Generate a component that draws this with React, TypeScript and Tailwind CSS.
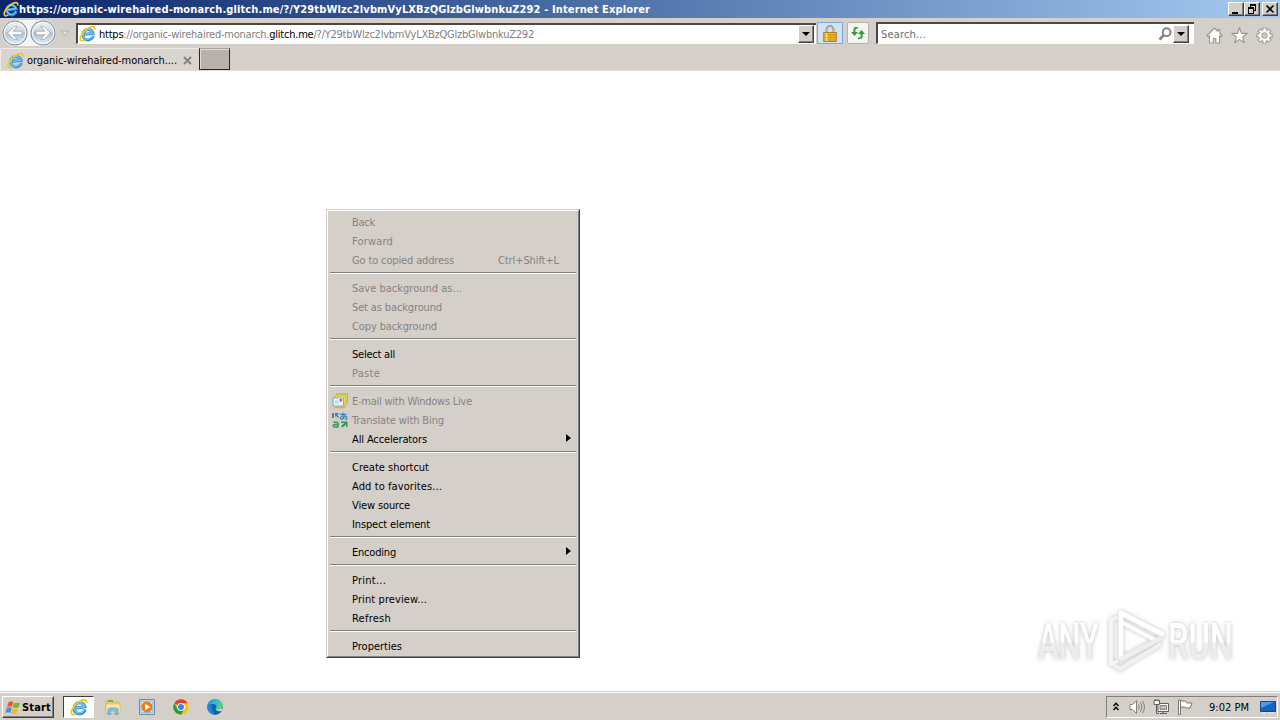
import { useLayoutEffect, useRef, useState } from "react";
import { clsx } from "clsx";

interface FitTextProps {
  width: number;
  className?: string;
  children: React.ReactNode;
}

// Spreads or tightens the letters so that a label takes up exactly `width` pixels.
function FitText({ width, className = "", children }: FitTextProps) {
  const ref = useRef<HTMLSpanElement>(null);
  const [spacing, setSpacing] = useState<number>(0);

  useLayoutEffect(() => {
    const el = ref.current;
    if (!el) return;
    el.style.letterSpacing = "0px";
    const count = (el.textContent || "").length;
    const next = (width - el.getBoundingClientRect().width) / count;
    el.style.letterSpacing = next + "px";
    setSpacing(next);
  }, [width]);

  return (
    <span
      ref={ref}
      className={clsx("inline-block shrink-0 whitespace-pre", className)}
      style={{ letterSpacing: spacing + "px" }}
    >
      {children}
    </span>
  );
}

function IeIcon({ className = "" }: { className?: string }) {
  return (
    <svg viewBox="0 0 18 18" className={clsx("shrink-0", className)}>
      <g transform="rotate(-8 9 9)">
        <path
          d="M14.6 12.200A5.500 5.500 0 1 1 14.900 9.600H5"
          fill="none"
          stroke="#2f8fdc"
          strokeWidth="3.2"
        />
        <path
          d="M14 12.100A5.200 5.200 0 1 1 14.500 9.400H5.500"
          fill="none"
          stroke="#6fcbf7"
          strokeWidth="1.5"
        />
      </g>
      <path
        d="M2.600 16.600C-.6 15 3 7.600 9 3.800c4.200-2.700 8-2.800 7.600.6"
        fill="none"
        stroke="#f6c81f"
        strokeWidth="1.900"
        strokeLinecap="round"
      />
      <path d="M2.400 16.500c1.100.5 2.500 0 3.600-.7" fill="none" stroke="#f6c81f" strokeWidth="1.500" />
    </svg>
  );
}

function NavButton({ forward = false }: { forward?: boolean }) {
  return (
    <svg viewBox="0 0 26 26" className="h-[26px] w-[26px] shrink-0">
      <defs>
        <linearGradient id="navFill" x1="0" y1="0" x2="0" y2="1">
          <stop offset="0" stopColor="#f2f4f6" />
          <stop offset="0.4" stopColor="#d3d9df" />
          <stop offset="0.52" stopColor="#b4bfca" />
          <stop offset="1" stopColor="#dff3fb" />
        </linearGradient>
      </defs>
      <circle cx="13" cy="13" r="11.900" fill="url(#navFill)" stroke="#8493a3" strokeWidth="1.300" />
      <circle cx="13" cy="13" r="10.700" fill="none" stroke="#f4f9fc" strokeWidth="1.100" />
      <path
        d="M5.500 13l6.500-6.300h3.400L11 11.200h9v3.600h-9l4.400 4.500H12z"
        fill="#fff"
        stroke="#9ba6b1"
        strokeWidth="0.8"
        transform={forward ? "rotate(180 13 13)" : undefined}
      />
    </svg>
  );
}

function ClassicButton({ className = "", children }: { className?: string; children?: React.ReactNode }) {
  return (
    <div
      className={clsx(
        "flex shrink-0 items-center justify-center border border-t-white border-l-white border-r-[#404040] border-b-[#404040] bg-[#d4d0c8] shadow-[inset_-1px_-1px_0_#808080]",
        className
      )}
    >
      {children}
    </div>
  );
}

function TitleBar() {
  return (
    <div className="flex h-[18px] items-center bg-linear-to-r from-[#0a246a] to-[#a6caf0] pl-[3px] pr-[2px]">
      <IeIcon className="h-4 w-4" />
      <FitText width={631} className="pt-px font-bold leading-[18px] text-white">
        https://organic-wirehaired-monarch.glitch.me/?/Y29tbWlzc2lvbmVyLXBzQGlzbGlwbnkuZ292 - Internet Explorer
      </FitText>
      <div className="ml-auto flex">
        <ClassicButton className="h-[14px] w-4">
          <svg viewBox="0 0 12 10" className="h-[10px] w-3">
            <path d="M2 8h6v2H2z" />
          </svg>
        </ClassicButton>
        <ClassicButton className="h-[14px] w-4">
          <svg viewBox="0 0 12 10" className="h-[10px] w-3" shapeRendering="crispEdges">
            <path d="M4 0h6v7H8V6h1V2H5v1H4zM2 3h6v7H2zM3 5v4h4V5z" fillRule="evenodd" />
          </svg>
        </ClassicButton>
        <ClassicButton className="ml-[2px] h-[14px] w-4">
          <svg viewBox="0 0 12 10" className="h-[10px] w-3">
            <path d="M2.500 1.500l7 7M9.500 1.500l-7 7" stroke="#000" strokeWidth="1.700" />
          </svg>
        </ClassicButton>
      </div>
    </div>
  );
}

function DropArrow({ className = "" }: { className?: string }) {
  return (
    <ClassicButton className={className}>
      <svg viewBox="0 0 8 4" className="h-1 w-2">
        <path d="M0 0h8L4 4z" />
      </svg>
    </ClassicButton>
  );
}

function AddressRow() {
  return (
    <div className="flex h-[30px] items-center pl-[2px]">
      <div className="flex h-[26px] items-center rounded-full bg-[#f4f5f5]">
        <NavButton />
        <div className="ml-[2px]">
          <NavButton forward />
        </div>
      </div>
      <svg viewBox="0 0 10 7" className="ml-1 mt-px h-[7px] w-[10px]">
        <path d="M1 1h8L5 5.500z" fill="#e8e5e1" stroke="#aaa5a0" strokeWidth="0.9" />
      </svg>
      <div className="ml-[6px] flex h-[21px] w-[740px] items-center border-t-2 border-l-2 border-b border-t-[#4c4743] border-l-[#4c4743] border-b-white bg-white">
        <IeIcon className="ml-[1px] h-[17px] w-[17px]" />
        <FitText width={435} className="ml-[3px] pt-[2px] leading-[17px] text-[#808080]">
          <span className="text-black">https</span>://organic-wirehaired-monarch.
          <span className="text-black">glitch.me</span>/?/Y29tbWlzc2lvbmVyLXBzQGlzbGlwbnkuZ292
        </FitText>
        <DropArrow className="ml-auto mr-[2px] h-[18px] w-4" />
      </div>
      <div className="ml-[1px] flex h-[22px] w-[26px] items-center justify-center border border-[#7fa9dc] bg-[#cfe2f8]">
        <svg viewBox="0 0 14 17" className="h-[17px] w-[14px]">
          <path d="M3.500 8V4.500a3.500 3.500 0 0 1 7 0V8" fill="none" stroke="#8d8465" strokeWidth="1.800" />
          <path d="M3.500 8V4.500a3.500 3.500 0 0 1 7 0V8" fill="none" stroke="#e5dfc8" strokeWidth="0.6" />
          <rect x="0.700" y="7.500" width="12.600" height="9" fill="#efb51f" stroke="#a8740e" strokeWidth="0.8" />
          <path d="M1 10h12M1 12.500h12M1 15h12" stroke="#c58a13" strokeWidth="0.8" />
          <path d="M3.500 8v8" stroke="#fbe08a" strokeWidth="1.500" />
        </svg>
      </div>
      <div className="ml-1 flex h-[22px] w-[22px] items-center justify-center rounded-[2px] border border-[#b5b2ae] bg-[#f3f3f1]">
        <svg viewBox="0 0 16 14" className="h-[14px] w-4">
          <path d="M7 1.500H5.800Q4.400 1.500 4.400 3V5H7L3.500 9 0 5h2.400V3Q2.400 0 5 0h2z" fill="#2e9e35" transform="translate(1 1)" />
          <path d="M7 1.500H5.800Q4.400 1.500 4.400 3V5H7L3.500 9 0 5h2.400V3Q2.400 0 5 0h2z" fill="#2e9e35" transform="rotate(180 7.500 6.500)" />
        </svg>
      </div>
      <div className="ml-[7px] flex h-[22px] w-[318px] items-center border-t-2 border-l-2 border-b border-t-[#4c4743] border-l-[#4c4743] border-b-white bg-white">
        <FitText width={45} className="ml-[3px] pt-[2px] leading-[17px] text-[#6d6d6d]">
          Search...
        </FitText>
        <svg viewBox="0 0 14 14" className="ml-auto h-[14px] w-[14px]">
          <circle cx="8.600" cy="5.200" r="3.900" fill="#fff" stroke="#85807d" strokeWidth="1.900" />
          <path d="M5.800 8.200L1.500 12.500" stroke="#85807d" strokeWidth="2.600" />
        </svg>
        <DropArrow className="ml-[1px] mr-[5px] h-[18px] w-4" />
      </div>
      <div className="ml-3 mt-[4px] flex items-center gap-2 text-[#99938e]">
        <svg viewBox="0 0 17 17" className="h-[17px] w-[17px]" fill="#fff" stroke="currentColor" strokeWidth="1.100" strokeLinejoin="round">
          <path d="M8.500 1L1 8.500l1.200 1.400 1.300-1.200V16h3.800v-4.500h2.500V16h3.800V8.700l1.200 1.200L16 8.500 14 6.500V2.500h-2v2z" />
        </svg>
        <svg viewBox="0 0 17 17" className="h-[17px] w-[17px]" fill="#fff" stroke="currentColor" strokeWidth="1.100" strokeLinejoin="round">
          <path d="M8.500 .8l2 5.600h5.700l-4.500 3.600 1.600 5.800-4.800-3.400-4.800 3.400L5.300 10 .8 6.400h5.700z" />
        </svg>
        <svg viewBox="0 0 17 17" className="h-[17px] w-[17px]">
          <g stroke="currentColor" strokeWidth="4.200">
            <path d="M8.500 .4v16.200M.4 8.500h16.200M2.800 2.800l11.400 11.400M14.200 2.800L2.800 14.200" />
          </g>
          <circle cx="8.500" cy="8.500" r="6.300" fill="currentColor" />
          <g stroke="#fff" strokeWidth="2.200">
            <path d="M8.500 1.300v14.400M1.300 8.500h14.400M3.400 3.400l10.200 10.200M13.600 3.400L3.400 13.600" />
          </g>
          <circle cx="8.500" cy="8.500" r="5.400" fill="#fff" />
          <circle cx="8.500" cy="8.500" r="2.700" fill="#d5cfc9" stroke="currentColor" />
        </svg>
      </div>
    </div>
  );
}

function TabRow() {
  return (
    <div className="flex h-[23px] items-start border-b border-[#dedad6]">
      <div className="flex h-[22px] w-[199px] items-center rounded-t-[2px] border-t border-l border-[#efedea] bg-[#d9d4ce] pl-[6px]">
        <IeIcon className="mt-px h-[17px] w-[17px]" />
        <FitText width={150} className="ml-[3px] pt-[2px] leading-[20px]">
          organic-wirehaired-monarch....
        </FitText>
        <svg viewBox="0 0 9 9" className="ml-[6px] mt-px h-[9px] w-[9px]">
          <path d="M1 1l7 7M8 1L1 8" stroke="#85807c" strokeWidth="1.900" />
        </svg>
      </div>
      <div className="h-[22px] w-[31px] border border-t-[#aaa39e] border-l-[#292522] border-r-[#292522] border-b-[#292522] bg-[#b9b1ac] shadow-[inset_1px_1px_0_#e1dcd8]" />
    </div>
  );
}

function MailIcon() {
  return (
    <svg viewBox="0 0 16 16" className="h-4 w-4">
      <path d="M4.500 2V.8h11v8.700h-1.300" fill="#d5dd8e" stroke="#a6bf3c" strokeWidth="1.200" />
      <path d="M2.500 3h11v8.500h-11z" fill="#ffe78c" stroke="#f2b62c" strokeWidth="1.500" />
      <path d="M1 5h10.500v8H1z" fill="#e4f5fe" stroke="#65b6e0" strokeWidth="1.200" />
      <path d="M3 8h3M3 10h4" stroke="#9acdea" />
      <path d="M7.500 6h2.500v2.500H7.500z" fill="#e95b3c" />
      <path d="M2 14.500h10l1.500-1.500" fill="none" stroke="#f1a72d" strokeWidth="1.600" />
    </svg>
  );
}

function TranslateIcon() {
  return (
    <svg viewBox="0 0 16 16" className="h-4 w-4 overflow-visible">
      <path d="M0 1h2v5H0zM3 1h3.500v1.500H5l2 2.500-1 1-2.400-2.500V5H3z" fill="#3c80b4" />
      {/* hiragana "a" */}
      <path
        d="M8 2.300h6.500M10.700.5c0 2.500 0 4.500.9 6M13.400 3.200C12.500 5.700 10.500 7.300 9 7 7.300 6.500 9 4 12 4c3.500 0 4 3 1.200 3.700"
        fill="none"
        stroke="#3c80b4"
        strokeWidth="1.200"
      />
      <path
        d="M1.500 10.200h3.200q1.300 0 1.300 1.300V15M6 12.500H2.700q-1.400 0-1.400 1.200T2.700 15H6"
        fill="none"
        stroke="#37955a"
        strokeWidth="1.500"
      />
      <path d="M9 9.500h6.500V15H14v-2.500L10.500 15.500 9 14l3.500-3H9z" fill="#37955a" />
    </svg>
  );
}

interface MenuItem {
  label: string;
  width: number;
  disabled?: boolean;
  shortcut?: string;
  submenu?: boolean;
  icon?: React.ReactNode;
}

const menuGroups: MenuItem[][] = [
  [
    { label: "Back", width: 23, disabled: true },
    { label: "Forward", width: 41, disabled: true },
    { label: "Go to copied address", width: 102, disabled: true, shortcut: "Ctrl+Shift+L" },
  ],
  [
    { label: "Save background as...", width: 110, disabled: true },
    { label: "Set as background", width: 90, disabled: true },
    { label: "Copy background", width: 85, disabled: true },
  ],
  [
    { label: "Select all", width: 43 },
    { label: "Paste", width: 28, disabled: true },
  ],
  [
    { label: "E-mail with Windows Live", width: 120, disabled: true, icon: <MailIcon /> },
    { label: "Translate with Bing", width: 92, disabled: true, icon: <TranslateIcon /> },
    { label: "All Accelerators", width: 75, submenu: true },
  ],
  [
    { label: "Create shortcut", width: 77 },
    { label: "Add to favorites...", width: 90 },
    { label: "View source", width: 58 },
    { label: "Inspect element", width: 78 },
  ],
  [{ label: "Encoding", width: 44, submenu: true }],
  [
    { label: "Print...", width: 34 },
    { label: "Print preview...", width: 75 },
    { label: "Refresh", width: 39 },
  ],
  [{ label: "Properties", width: 50 }],
];

function ContextMenu() {
  return (
    <div className="absolute left-[326px] top-[209px] w-[254px] border border-t-[#d4d0c8] border-l-[#d4d0c8] border-r-[#404040] border-b-[#404040] bg-[#d5cfc9]">
      <div className="border border-t-white border-l-white border-r-[#808080] border-b-[#808080] py-px">
        {menuGroups.map((group, i) => (
          <div key={i}>
            {i > 0 && (
              <div className="h-[9px] px-[2px] pt-[3px]">
                <div className="h-[2px] border-t border-b border-t-[#808080] border-b-white" />
              </div>
            )}
            {group.map((item) => (
              <div
                key={item.label}
                className={clsx("flex h-[19px] items-center pl-[4px]", item.disabled ? "text-[#878380]" : "text-black")}
              >
                <div className="mr-1 w-4">{item.icon}</div>
                <FitText width={item.width} className="pt-[2px]">
                  {item.label}
                </FitText>
                {item.shortcut && (
                  <FitText width={61} className="ml-auto mr-[19px] pt-[2px]">
                    {item.shortcut}
                  </FitText>
                )}
                {item.submenu && (
                  <svg viewBox="0 0 5 8" className="mb-[2px] ml-auto mr-[7px] h-2 w-[5px]">
                    <path d="M0 0l5 4-5 4z" />
                  </svg>
                )}
              </div>
            ))}
          </div>
        ))}
      </div>
    </div>
  );
}

function Watermark() {
  return (
    <svg
      viewBox="0 0 210 76"
      className="absolute left-[1030px] top-[602px] h-[76px] w-[210px] overflow-visible drop-shadow-[0_0_2px_rgba(0,0,0,0.26)]"
      fontFamily="Roboto, Liberation Sans, sans-serif"
      fontSize="50"
      fontWeight="500"
    >
      <defs>
        <linearGradient id="wm" x1="0" y1="0" x2="0" y2="1">
          <stop offset="0.5" stopColor="#fff" />
          <stop offset="0.52" stopColor="#eeeeee" />
          <stop offset="1" stopColor="#ececec" />
        </linearGradient>
      </defs>
      <text x="8" y="57" textLength="61" lengthAdjust="spacingAndGlyphs" fill="url(#wm)">ANY</text>
      <text x="138" y="57" textLength="65" lengthAdjust="spacingAndGlyphs" fill="url(#wm)">RUN</text>
      <path d="M88 15l-7 3v44l7-3" fill="none" stroke="#f6f6f6" strokeWidth="4" strokeLinejoin="round" />
      <path d="M91 56V11l41 21" fill="none" stroke="#fff" strokeWidth="5" strokeLinejoin="round" strokeLinecap="round" />
      <path d="M91 20l34 18" fill="none" stroke="#fff" strokeWidth="4" strokeLinecap="round" />
      <path d="M91 57l40-21" stroke="#eeeeee" strokeWidth="5" strokeLinecap="round" />
      <path d="M83 62l7 5 41-25" fill="none" stroke="#f1f1f1" strokeWidth="4" strokeLinejoin="round" />
    </svg>
  );
}

function StartFlag() {
  return (
    <svg viewBox="0 0 16 15" className="h-[15px] w-4">
      <path d="M3.500 2.200Q6 .5 8.300 2L7 7Q4.500 5.600 2 7z" fill="#e9562b" />
      <path d="M9.200 2.500Q12 3.800 15 2.200L13.500 7.300Q10.500 8.800 7.900 7.400z" fill="#78b72a" />
      <path d="M1.800 7.900Q4.200 6.500 6.700 8L5.400 12.900Q3 11.400.4 12.900z" fill="#3f8fd8" />
      <path d="M7.600 8.400Q10.300 9.700 13.200 8.300L11.800 13.300Q9 14.700 6.300 13.300z" fill="#f5b922" />
    </svg>
  );
}

function Taskbar() {
  return (
    <div className="flex h-[28px] items-start border-t border-white bg-[#d5cfc9]">
      <ClassicButton className="ml-[2px] mt-[3px] h-[22px] w-[52px] gap-px">
        <StartFlag />
        <FitText width={29} className="pt-px text-[11px] font-bold leading-[20px]">
          Start
        </FitText>
      </ClassicButton>
      <div className="ml-[9px] mt-[3px] flex h-[22px] w-[31px] items-center justify-center border border-t-[#404040] border-l-[#404040] border-r-white border-b-white bg-white">
        <IeIcon className="h-[18px] w-[18px]" />
      </div>
      <div className="ml-[10px] mt-[5px] flex items-center gap-4">
        <svg viewBox="0 0 18 18" className="h-[18px] w-[18px]">
          <path d="M2 3h5l1 1h7v11H2z" fill="#efd072" stroke="#cfaa48" strokeWidth="0.7" />
          <path d="M4 2h5v2H4z" fill="#62b34c" />
          <path d="M2 6h14v9H2z" fill="#fae9a6" stroke="#d8b658" strokeWidth="0.7" />
          <path d="M4 16.500v-4.500q0-2 2-2h6q2 0 2 2v4.500h-2.500V13h-5v3.500z" fill="#82c4e8" stroke="#5097c3" strokeWidth="0.7" />
        </svg>
        <svg viewBox="0 0 18 18" className="h-[18px] w-[18px]">
          <path d="M1.500 1.500h15v15h-15z" fill="#b7d7ed" stroke="#5c91bb" />
          <path d="M3.500 3.500h11v11h-11z" fill="#d9ebf7" stroke="#86b4d5" strokeWidth="0.6" />
          <circle cx="9" cy="9" r="5.500" fill="#ee7d16" />
          <path d="M7 5.700v6.600L12.300 9z" fill="#fff" />
        </svg>
        <svg viewBox="0 0 18 18" className="h-[18px] w-[18px]">
          <circle cx="9" cy="9" r="7.700" fill="#f8c51c" />
          <path d="M9 9L2.330 5.150A7.700 7.700 0 0 1 15.670 5.150H9z" fill="#e33e2f" />
          <path d="M9 9L5.700 10.900 2.330 5.150A7.700 7.700 0 0 0 9 16.700l3.300-5.800z" fill="#289b4b" />
          <circle cx="9" cy="9" r="3.900" fill="#fff" />
          <circle cx="9" cy="9" r="3" fill="#4081ea" />
        </svg>
        <svg viewBox="0 0 18 18" className="h-[18px] w-[18px]">
          <defs>
            <linearGradient id="edgeTop" x1="0" y1="0" x2="1" y2="0.4">
              <stop offset="0" stopColor="#1a8fd8" />
              <stop offset="0.6" stopColor="#2fc0d4" />
              <stop offset="1" stopColor="#63d463" />
            </linearGradient>
          </defs>
          <circle cx="9" cy="9" r="7.800" fill="#0f5fae" />
          <path d="M1.200 8.500C1.800 4.200 5 1.200 9 1.200c4.500 0 7.800 3.300 7.800 6.700 0 2.500-2 3.900-4.300 3.900-1.800 0-2.600-.7-2.600-1.300 0-.5.7-.8.7-1.900 0-1.500-1.500-2.700-3.800-2.700-2.600 0-4.900 1.400-5.600 2.600z" fill="url(#edgeTop)" />
          <path d="M9.500 10.500c0 2.200 3 3.700 6.400 2.200l.8-1.700-2-.2q-4 1.600-5.200-.3z" fill="#d5cfc9" />
          <path d="M6.500 7.500C4.500 11 7 16 11 16.500 6.500 17.500 2 14.500 1.300 9.500q1.700-3 5.200-2z" fill="#1789d6" />
        </svg>
      </div>
      <div className="ml-auto mr-[2px] mt-[3px] flex h-[22px] w-[172px] items-center border border-t-[#808080] border-l-[#808080] border-r-white border-b-white pl-[6px]">
        <svg viewBox="0 0 6 9" className="mb-px h-[9px] w-[6px]" fill="none" stroke="#000" strokeWidth="1.400">
          <path d="M.5 4L3 1.300 5.500 4M.5 8L3 5.300 5.500 8" />
        </svg>
        <svg viewBox="0 0 16 16" className="ml-[10px] h-4 w-4" fill="none" stroke="#85817e">
          <path d="M1 5.500h2.500L7.500 1.500v13l-4-4H1z" fill="#fff" />
          <path d="M9.500 5.500q1.500 2.500 0 5M11.500 3.500q3 4.500 0 9M13.500 2q4 6 0 12" />
        </svg>
        <svg viewBox="0 0 16 16" className="ml-2 h-4 w-4" stroke="#5f5c5a">
          <path d="M5 4.500h10.500v8H5z" fill="#f8f8f8" />
          <path d="M7 6.500h6.500v4H7z" fill="#c0bdb9" strokeWidth="0.700" />
          <path d="M7 14.500h7M10 12.500v2" />
          <path d="M1 1.500h5.500v4H1z" fill="#fff" />
          <path d="M2.500 0v2M5 0v2M3.500 6v8.500H6" fill="none" />
        </svg>
        <svg viewBox="0 0 16 16" className="ml-2 h-4 w-4" fill="#fff" stroke="#777370">
          <path d="M1.500 1h2v14.500h-2z" />
          <path d="M3.500 2h5l1.500 2h5l-2 5h-4L7.500 8h-4z" />
        </svg>
        <FitText width={40} className="ml-4 pt-[2px] leading-[18px]">
          9:02 PM
        </FitText>
        <svg viewBox="0 0 16 14" className="ml-auto mr-[1px] h-[14px] w-4">
          <path d="M.5 1.500h15v10H.5z" fill="#1764be" stroke="#16458a" />
          <path d="M1 2h13L1 8z" fill="#4f9ae3" />
          <path d="M2 12.800h4M8 12.800h6" stroke="#e5eef6" />
        </svg>
      </div>
    </div>
  );
}

export default function App() {
  return (
    <div className="relative flex h-[720px] w-[1280px] flex-col overflow-hidden bg-[#d5cfc9] font-['DejaVu_Sans_Condensed','DejaVu_Sans',sans-serif] text-[11px] leading-[19px] text-black select-none">
      <TitleBar />
      <AddressRow />
      <TabRow />
      <main className="flex-1 border-b border-[#d5cfc9] bg-white" />
      <Taskbar />
      <ContextMenu />
      <Watermark />
    </div>
  );
}
